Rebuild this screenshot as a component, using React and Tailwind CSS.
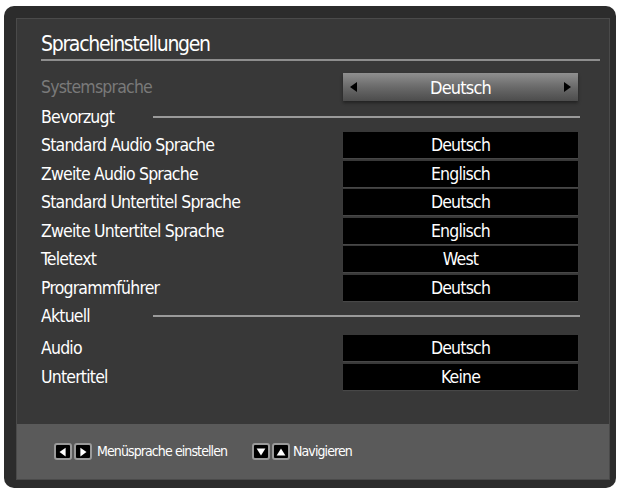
const rows = [
  ['Standard Audio Sprache', 'Deutsch'],
  ['Zweite Audio Sprache', 'Englisch'],
  ['Standard Untertitel Sprache', 'Deutsch'],
  ['Zweite Untertitel Sprache', 'Englisch'],
  ['Teletext', 'West'],
  ['Programmführer', 'Deutsch'],
];

const current = [
  ['Audio', 'Deutsch'],
  ['Untertitel', 'Keine'],
];

function Row({ label, value }) {
  return (
    <div className="flex h-[28.5px] items-center">
      <div className="flex-1 text-[17.5px] tracking-[-0.8px] text-white">{label}</div>
      <div className="mr-[31px] flex h-[26px] w-[235px] items-center justify-center bg-black text-[17.5px] tracking-[-0.8px] text-white shadow-[0_1px_1px_rgba(255,255,255,0.08)]">
        {value}
      </div>
    </div>
  );
}

function Section({ label }) {
  return (
    <div className="flex h-[28px] items-center">
      <div className="w-[112px] text-[17.5px] tracking-[-0.8px] text-white">{label}</div>
      <div className="mr-[29px] h-[2px] flex-1 bg-[#9a9a9a]" />
    </div>
  );
}

function Key({ dir }) {
  const pts = {
    left: '11,3 11,13 4,8',
    right: '5,3 5,13 12,8',
    down: '3,4 13,4 8,12',
    up: '3,12 13,12 8,4',
  };
  return (
    <span className="flex h-[17px] w-[18px] items-center justify-center rounded-[3px] border-2 border-[#9a9a9a] bg-black">
      <svg width="16" height="16" viewBox="0 0 16 16">
        <polygon points={pts[dir]} fill="#fff" />
      </svg>
    </span>
  );
}

export default function App() {
  return (
    <div
      className="h-[491px] w-[620px] bg-white pl-[4px] pt-[6px]"
      style={{ fontFamily: '"Liberation Sans Narrow", "DejaVu Sans Condensed", sans-serif' }}
    >
      <div className="h-[482px] w-[612px] rounded-[10px] bg-[#2c2c2c] pb-[8px] pl-[12px] pr-[6px] pt-[12px]">
        <div className="flex h-full flex-col border border-[#4a4a4a] bg-[#383838]">
          <div className="flex-1 pl-[24px]">
            <div className="pt-[10px] text-[21px] leading-[30px] tracking-[-1.3px] text-white">Spracheinstellungen</div>
            <div className="mr-[9px] h-[2px] bg-[#8e8e8e]" />

            <div className="mt-[10px] flex h-[32px] items-center">
              <div className="flex-1 text-[17.5px] tracking-[-0.8px] text-[#7a7a7a]">Systemsprache</div>
              <div className="mr-[31px] flex h-[28px] w-[235px] items-center justify-between bg-gradient-to-b from-[#909090] via-[#6a6a6a] to-[#4c4c4c] px-[7px] text-[18px] tracking-[-0.8px] text-white shadow-[0_2px_3px_rgba(0,0,0,0.4)]">
                <svg width="8" height="10" viewBox="0 0 8 10">
                  <polygon points="7,0 7,10 0,5" fill="#000" />
                </svg>
                <span>Deutsch</span>
                <svg width="8" height="10" viewBox="0 0 8 10">
                  <polygon points="1,0 1,10 8,5" fill="#000" />
                </svg>
              </div>
            </div>

            <Section label="Bevorzugt" />
            {rows.map(([l, v]) => (
              <Row key={l} label={l} value={v} />
            ))}
            <Section label="Aktuell" />
            <div className="h-[4px]" />
            {current.map(([l, v]) => (
              <Row key={l} label={l} value={v} />
            ))}
          </div>

          <div className="flex h-[55px] items-center bg-[#5a5a5a] pl-[37px] text-[14px] tracking-[-0.9px] text-white">
            <div className="flex items-center gap-[2px]">
              <Key dir="left" />
              <Key dir="right" />
            </div>
            <span className="ml-[5px] w-[155px]">Menüsprache einstellen</span>
            <div className="flex items-center gap-[2px]">
              <Key dir="down" />
              <Key dir="up" />
            </div>
            <span className="ml-[3px]">Navigieren</span>
          </div>
        </div>
      </div>
    </div>
  );
}
